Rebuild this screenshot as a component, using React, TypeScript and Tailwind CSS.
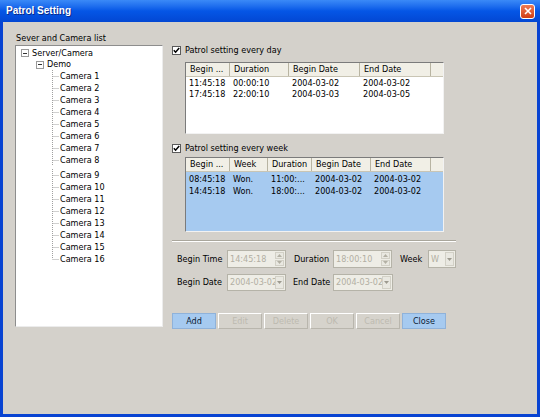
import React from 'react';

const FONT = { fontFamily: '"DejaVu Sans Condensed", "Liberation Sans", Arial, sans-serif' };

const cameras = Array.from({ length: 16 }, (_, i) => `Camera ${i + 1}`);

const Expander: React.FC = () => (
  <span className="w-[8px] h-[8px] border border-[#9a9a9a] bg-white flex items-center justify-center shrink-0">
    <span className="w-[4px] h-px bg-[#333]" />
  </span>
);

const Connector: React.FC<{ last?: boolean }> = ({ last }) => (
  <svg width="8" height="12" className="shrink-0">
    <line x1="0.5" y1="0" x2="0.5" y2={last ? 6 : 12} stroke="#a0a0a0" strokeDasharray="1 1" />
    <line x1="0.5" y1="6.5" x2="7" y2="6.5" stroke="#a0a0a0" strokeDasharray="1 1" />
  </svg>
);

const Check: React.FC<{ label: string }> = ({ label }) => (
  <div className="flex items-center h-[10px] gap-[4px]">
    <span className="w-[9px] h-[9px] border border-[#5a5a5a] bg-white flex items-center justify-center">
      <svg width="7" height="7" viewBox="0 0 7 7">
        <path d="M0.8 3.2 L2.6 5.2 L6.2 1" stroke="#000" strokeWidth="1.5" fill="none" />
      </svg>
    </span>
    <span className="text-[9px] leading-none whitespace-nowrap">{label}</span>
  </div>
);

type Col = { title: string; w: string };

const ListTable: React.FC<{ cols: Col[]; rows: string[][]; blue?: boolean; h: string; rowH: string }> = ({ cols, rows, blue, h, rowH }) => (
  <div className={`ml-[13px] w-[259px] ${h} border-t border-l border-[#7b7b7b] border-r-[#f2f2f2] border-b-[#f2f2f2] border-r border-b flex flex-col ${blue ? 'bg-[#a6caf0]' : 'bg-white'}`}>
    <div className="flex h-[14px] bg-[#f1efe6] border-b border-[#c9c5b4] shrink-0">
      {cols.map((c) => (
        <div key={c.title} className={`${c.w} border-r border-[#b8b4a2] pl-[4px] flex items-center text-[9px] leading-none whitespace-nowrap overflow-hidden`}>
          {c.title}
        </div>
      ))}
      <div className="flex-1" />
    </div>
    <div className="pt-px">
      {rows.map((r, i) => (
        <div key={i} className={`flex ${rowH} items-center`}>
          {r.map((v, j) => (
            <div key={j} className={`${cols[j].w} pl-[3px] text-[9px] leading-none whitespace-nowrap`}>
              {v}
            </div>
          ))}
        </div>
      ))}
    </div>
  </div>
);

const Spin: React.FC = () => (
  <div className="w-[10px] flex flex-col gap-px py-px pr-px">
    {[0, 1].map((i) => (
      <div key={i} className="flex-1 bg-[#e9e8e1] border border-[#d2d0c6] flex items-center justify-center">
        <svg width="5" height="3" viewBox="0 0 5 3">
          <path d={i === 0 ? 'M0 3 L2.5 0 L5 3 Z' : 'M0 0 L2.5 3 L5 0 Z'} fill="#b3b0a4" />
        </svg>
      </div>
    ))}
  </div>
);

const Drop: React.FC = () => (
  <div className="w-[10px] py-px pr-px flex">
    <div className="flex-1 bg-[#e9e8e1] border border-[#d2d0c6] flex items-center justify-center">
      <svg width="5" height="3" viewBox="0 0 5 3">
        <path d="M0 0 L2.5 3 L5 0 Z" fill="#9d9a8f" />
      </svg>
    </div>
  </div>
);

const Field: React.FC<{ value: string; w: string; kind: 'spin' | 'drop' }> = ({ value, w, kind }) => (
  <div className={`${w} h-full border border-[#b5b3a8] bg-[#eeede6] flex shrink-0`}>
    <div className="flex-1 min-w-0 pl-[2px] text-[9px] leading-none text-[#b2afa3] flex items-center overflow-hidden whitespace-nowrap">
      {value}
    </div>
    {kind === 'spin' ? <Spin /> : <Drop />}
  </div>
);

const Btn: React.FC<{ label: string; active?: boolean }> = ({ label, active }) => (
  <div
    className={`w-[44px] h-[16px] flex items-center justify-center text-[9px] leading-none border ${
      active
        ? 'bg-[#a6caf0] border-[#8fb2da] text-[#0b1a33]'
        : 'bg-[#d6d3cc] border-t-white border-l-white border-r-[#b9b6ad] border-b-[#b9b6ad] text-[#bdbab0]'
    }`}
  >
    {label}
  </div>
);

export default function App() {
  return (
    <div className="w-[540px] h-[417px] flex flex-col bg-[#0843d2] text-black overflow-hidden" style={FONT}>
      {/* title bar */}
      <div className="h-[22px] shrink-0 flex items-center justify-between pl-[6px] pr-[5px] bg-linear-to-b from-[#3b8af7] via-[#0556e6] to-[#0347d3]">
        <span className="text-white font-bold text-[10px] leading-none [text-shadow:1px_1px_0_#0a2a8a] font-['Liberation_Sans',Arial,sans-serif]">Patrol Setting</span>
        <span className="w-[15px] h-[15px] rounded-[3px] border border-white bg-linear-to-b from-[#ee7a52] to-[#cf3c12] flex items-center justify-center">
          <svg width="8" height="8" viewBox="0 0 8 8">
            <path d="M1 1 L7 7 M7 1 L1 7" stroke="#fff" strokeWidth="1.6" />
          </svg>
        </span>
      </div>

      {/* body */}
      <div className="flex-1 mx-[3px] mb-[3px] bg-[#d4d1cb] flex pt-[10px] pl-[12px]">
        {/* left */}
        <div className="w-[148px] flex flex-col">
          <div className="h-[13px] pt-[2px] text-[9px] leading-none pl-px whitespace-nowrap">Sever and Camera list</div>
          <div className="h-[282px] bg-white border border-t-[#8d8d8d] border-l-[#8d8d8d] border-r-[#ececec] border-b-[#ececec] pt-px">
            <div className="flex items-center h-[12px] pl-[5px] gap-[3px]">
              <Expander />
              <span className="text-[9px] leading-none">Server/Camera</span>
            </div>
            <div className="flex items-center h-[11px] pl-[20px] gap-[3px]">
              <Expander />
              <span className="text-[9px] leading-none">Demo</span>
            </div>
            <div className="pl-[36px]">
              {cameras.map((c, i) => (
                <div key={c} className={`flex items-center h-[12px] ${i === 8 ? 'mt-[3px]' : ''}`}>
                  <Connector last={i === cameras.length - 1} />
                  <span className="text-[9px] leading-none">{c}</span>
                </div>
              ))}
            </div>
          </div>
        </div>

        {/* right */}
        <div className="ml-[9px] w-[284px] flex flex-col pt-[13px]">
          <Check label="Patrol setting every day" />
          <div className="mt-[7px]">
            <ListTable
              h="h-[72px]"
              rowH="h-[11px]"
              cols={[
                { title: 'Begin ...', w: 'w-[44px]' },
                { title: 'Duration', w: 'w-[59px]' },
                { title: 'Begin Date', w: 'w-[71px]' },
                { title: 'End Date', w: 'w-[71px]' },
              ]}
              rows={[
                ['11:45:18', '00:00:10', '2004-03-02', '2004-03-02'],
                ['17:45:18', '22:00:10', '2004-03-03', '2004-03-05'],
              ]}
            />
          </div>

          <div className="mt-[9px]">
            <Check label="Patrol setting every week" />
          </div>
          <div className="mt-[4px]">
            <ListTable
              blue
              h="h-[75px]"
              rowH="h-[12px]"
              cols={[
                { title: 'Begin ...', w: 'w-[44px]' },
                { title: 'Week', w: 'w-[38px]' },
                { title: 'Duration', w: 'w-[44px]' },
                { title: 'Begin Date', w: 'w-[59px]' },
                { title: 'End Date', w: 'w-[60px]' },
              ]}
              rows={[
                ['08:45:18', 'Won.', '11:00:...', '2004-03-02', '2004-03-02'],
                ['14:45:18', 'Won.', '18:00:...', '2004-03-02', '2004-03-02'],
              ]}
            />
          </div>

          <div className="mt-[8px] h-[2px] border-t border-[#a9a69c] border-b border-b-white" />

          <div className="mt-[8px] h-[18px] flex items-center pl-[5px] text-[9px] leading-none whitespace-nowrap">
            <span className="w-[50px]">Begin Time</span>
            <Field value="14:45:18" w="w-[59px]" kind="spin" />
            <span className="ml-[8px] w-[39px]">Duration</span>
            <Field value="18:00:10" w="w-[59px]" kind="spin" />
            <span className="ml-[8px] w-[28px]">Week</span>
            <Field value="W" w="w-[28px]" kind="drop" />
          </div>
          <div className="mt-[6px] h-[17px] flex items-center pl-[5px] text-[9px] leading-none whitespace-nowrap">
            <span className="w-[50px]">Begin Date</span>
            <Field value="2004-03-02" w="w-[59px]" kind="drop" />
            <span className="ml-[7px] w-[40px]">End Date</span>
            <Field value="2004-03-02" w="w-[60px]" kind="drop" />
          </div>

          <div className="mt-[22px] flex gap-[2px]">
            <Btn label="Add" active />
            <Btn label="Edit" />
            <Btn label="Delete" />
            <Btn label="OK" />
            <Btn label="Cancel" />
            <Btn label="Close" active />
          </div>
        </div>
      </div>
    </div>
  );
}
